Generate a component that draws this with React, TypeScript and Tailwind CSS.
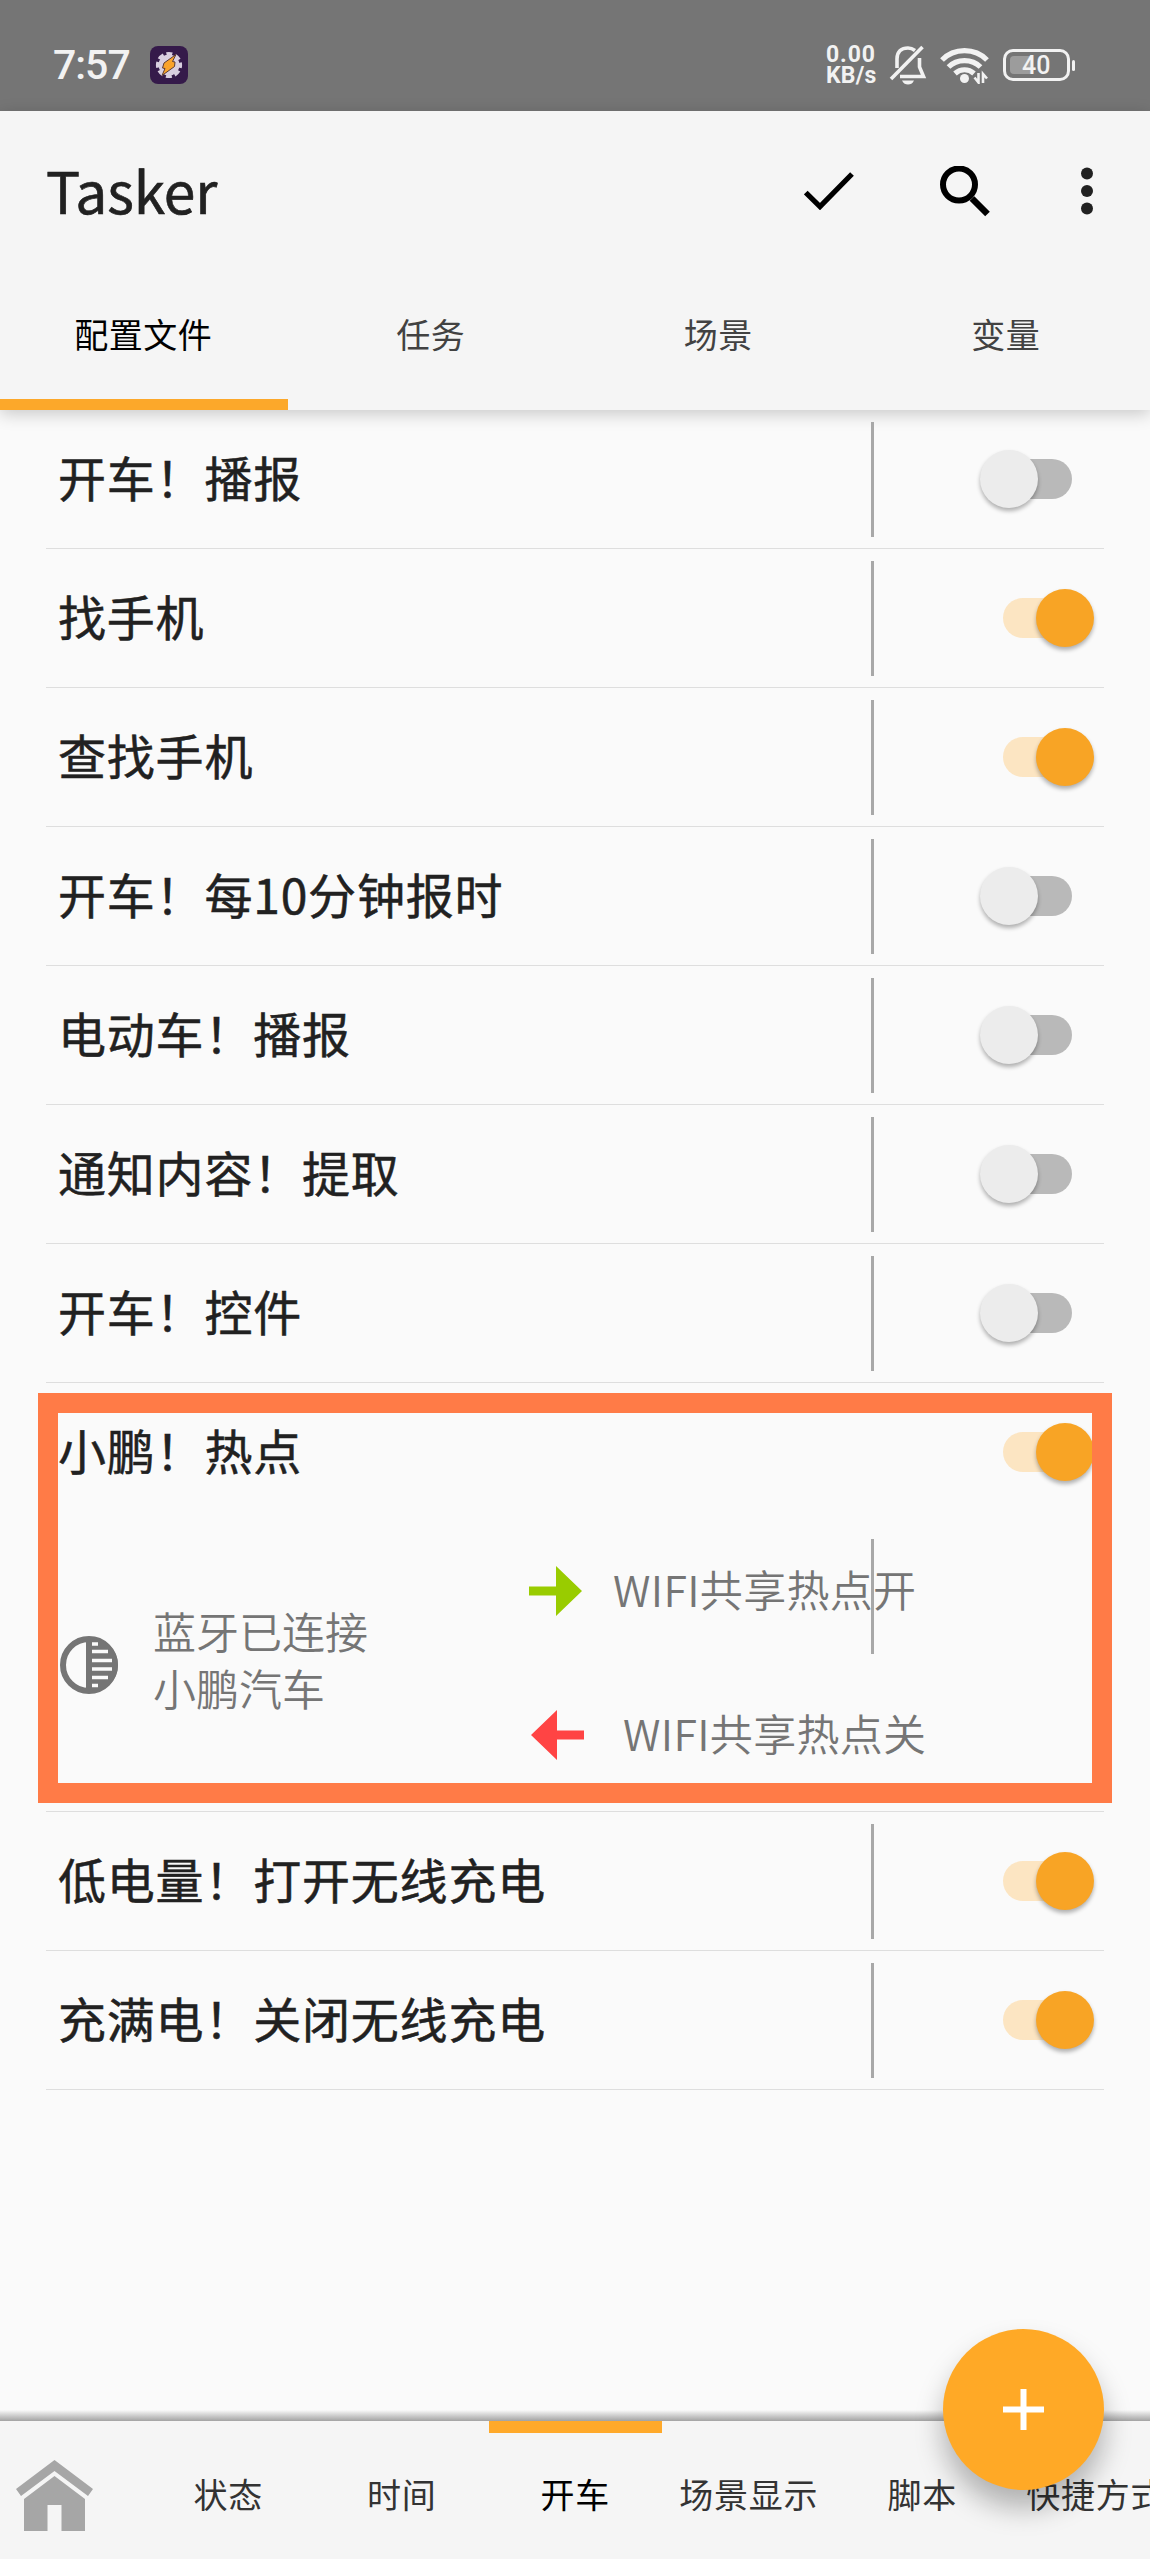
import clsx from "clsx";

const tabs = ["配置文件", "任务", "场景", "变量"];

const profiles = [
  { id: 1, name: "开车！播报", enabled: false },
  { id: 2, name: "找手机", enabled: true },
  { id: 3, name: "查找手机", enabled: true },
  { id: 4, name: "开车！每10分钟报时", enabled: false },
  { id: 5, name: "电动车！播报", enabled: false },
  { id: 6, name: "通知内容！提取", enabled: false },
  { id: 7, name: "开车！控件", enabled: false },
];

const chargingProfiles = [
  { id: 9, name: "低电量！打开无线充电", enabled: true },
  { id: 10, name: "充满电！关闭无线充电", enabled: true },
];

const projects = ["状态", "时间", "开车", "场景显示", "脚本", "快捷方式"];

function StatusBar() {
  return (
    <div className="flex h-[111px] shrink-0 items-center bg-[#757575] pt-[19px] pr-[75px] pl-[53px] font-[Roboto,sans-serif] text-[#f2f2f2]">
      <span className="w-[97px] text-[41px] leading-none font-medium tracking-[-1px]">7:57</span>
      <svg className="h-[38px] w-[38px]" viewBox="0 0 38 38">
        <rect width="38" height="38" rx="8" fill="#351a4a" />
        <circle cx="19" cy="19" r="10.5" fill="#d9cfe0" />
        <circle cx="19" cy="19" r="10.8" fill="none" stroke="#d9cfe0" strokeWidth="4.6" strokeDasharray="5.600 2.882" strokeDashoffset="2.800" />
        <path d="M26 8.500 L14 17 L12.500 22 L15 22.500 L12 29.500 L24.500 20.500 L25 16 L22.500 15.500 Z" fill="#f9a32a" stroke="#5a3a35" strokeWidth="1" />
      </svg>
      <div className="mr-[12px] ml-auto flex w-[51px] flex-col gap-[5px] text-[23px] leading-[16px] font-bold">
        <span className="tracking-[0.9px]">0.00</span>
        <span className="tracking-[0.2px]">KB/s</span>
      </div>
      <svg className="h-[40px] w-[38px]" viewBox="0 0 38 40" fill="none" stroke="currentColor" strokeWidth="3.6">
        <path d="M8 23 V14 C8 6.500 12.500 3 19 3 C22 3 24 4 26 5.500" />
        <path d="M30.5 13 V22 L34.5 31.500 H11" />
        <path d="M2 34 L33.500 2" />
        <path d="M13 35.500 H25 C23.500 38.500 21.500 39.500 19 39.500 C16.500 39.500 14.500 38.500 13 35.500 Z" fill="currentColor" stroke="none" />
      </svg>
      <svg className="ml-[13px] h-[37px] w-[49px]" viewBox="0 0 49 37" fill="none" stroke="currentColor" strokeWidth="5.2">
        <path d="M2 13 C14 .5 35 .5 47 13" />
        <path d="M8.500 20 C17 11.500 32 11.500 40.500 20" />
        <path d="M15 26.500 C20.500 21.500 28.500 21.500 34 26.500" />
        <circle cx="24.500" cy="31.500" r="4.500" fill="currentColor" stroke="none" />
        <path d="M38.500 26 V35.500 L34.500 30.500 M43 36 V27 L47 31.500" strokeWidth="2.6" />
      </svg>
      <div className="ml-[14px] flex h-[32px] w-[67px] items-center rounded-[10px] border-[3px] border-[#f2f2f2] p-1">
        <div className="flex h-[18px] w-[22px] items-center rounded-l-[4px] bg-[#9c9c9c] pl-[12px]">
          <span className="text-[25px] leading-none font-medium">40</span>
        </div>
      </div>
      <div className="ml-[2px] h-[11px] w-[3px] rounded-sm bg-[#f2f2f2]" />
    </div>
  );
}

function AppBar() {
  return (
    <div className="flex h-[163px] shrink-0 items-center pb-[3px] pl-[46px]">
      <h1 className="mr-auto pb-[3px] text-[57px] leading-none tracking-[-0.2px] text-[#212121] [-webkit-text-stroke:0.6px_#212121]">
        Tasker
      </h1>
      <svg className="h-[38px] w-[50px]" viewBox="0 0 50 38" fill="none" stroke="#000" strokeWidth="5.200">
        <path d="M1.800 20.500 L16 34.600 L48 2" />
      </svg>
      <svg className="ml-[86px] h-[51px] w-[51px]" viewBox="0 0 51 51" fill="none" stroke="#000">
        <circle cx="19" cy="18.500" r="16" strokeWidth="6" />
        <path d="M32 32.500 L47.500 48" strokeWidth="6.500" />
      </svg>
      <svg className="mr-[56px] ml-[89px] h-[48px] w-[14px]" viewBox="0 0 14 48" fill="#212121">
        <circle cx="7" cy="6.500" r="6" />
        <circle cx="7" cy="24" r="6" />
        <circle cx="7" cy="41.500" r="6" />
      </svg>
    </div>
  );
}

function Toggle({ enabled }: { enabled: boolean }) {
  return (
    <div
      className={clsx(
        "mx-auto flex h-10 w-[69px] items-center rounded-full",
        enabled ? "justify-end bg-[#fce5c2]" : "bg-[#b9b9b9]"
      )}
    >
      <div
        className={clsx(
          "h-[58px] w-[58px] shrink-0 rounded-full shadow-[0_3px_4px_rgba(0,0,0,0.3)]",
          enabled ? "-mr-[22px] bg-[#f8a425]" : "-ml-[23px] bg-[#ececec]"
        )}
      />
    </div>
  );
}

function ProfileName({ name }: { name: string }) {
  return (
    <span className="w-[825px] pb-[6px] pl-[12px] text-[48px] leading-none tracking-[0.8px] text-[#212121] [-webkit-text-stroke:0.5px_#212121]">
      {name}
    </span>
  );
}

function ProfileRow({ name, enabled }: { name: string; enabled: boolean }) {
  return (
    <div className="flex h-[139px] items-center border-b border-[#dedede]">
      <ProfileName name={name} />
      <div className="h-[115px] w-[3px] bg-[#a8a8a8]" />
      <div className="w-[230px] pl-[96px]">
        <Toggle enabled={enabled} />
      </div>
    </div>
  );
}

function HotspotProfile() {
  return (
    <div className="relative h-[429px] border-b border-[#dedede]">
      <div className="flex h-[138px] items-center">
        <ProfileName name="小鹏！热点" />
        <div className="w-[233px] pl-[99px]">
          <Toggle enabled />
        </div>
      </div>
      <div className="flex h-[289px] text-[43px] leading-[58px] text-[#757575]">
        <div className="flex w-[483px] items-center pb-[2px] pl-[14px]">
          <svg className="mr-[35px] h-[58px] w-[58px]" viewBox="0 0 58 58">
            <circle cx="29" cy="29" r="26" fill="none" stroke="#757575" strokeWidth="6" />
            <path d="M26 3 H32 A26 26 0 0 1 32 55 H26 Z" fill="#757575" />
            <path
              d="M32 8 H38 M32 15.500 H48 M32 24.500 H52 M32 33 H52 M32 41.500 H48 M32 49.500 H38"
              stroke="#fafafa"
              strokeWidth="3.500"
            />
          </svg>
          <div className="pb-[11px] leading-[57px] font-[350]">
            <div>蓝牙已连接</div>
            <div>小鹏汽车</div>
          </div>
        </div>
        <div className="pt-[41px] font-[350] tracking-[0.3px]">
          <div className="flex h-[58px] items-center">
            <svg className="h-[50px] w-[53px]" viewBox="0 0 53 50" fill="#99cc00">
              <path d="M0 20.500 H27 V0 L53 25 L27 50 V29.500 H0 Z" />
            </svg>
            <span className="ml-[31px] pb-[7px]">WIFI共享热点开</span>
          </div>
          <div className="mt-[86px] flex h-[58px] items-center">
            <svg className="ml-[2px] h-[50px] w-[53px]" viewBox="0 0 53 50" fill="#ff4444">
              <path d="M53 20.500 H26 V0 L0 25 L26 50 V29.500 H53 Z" />
            </svg>
            <span className="ml-[39px] pb-[7px]">WIFI共享热点关</span>
          </div>
        </div>
      </div>
      <div className="absolute top-[156px] left-[825px] h-[115px] w-[3px] bg-[#a8a8a8]" />
      <div className="absolute top-[10px] -left-[8px] h-[410px] w-[1074px] border-[20px] border-[#ff7b47]" />
    </div>
  );
}

function ProjectBar() {
  return (
    <div className="relative flex h-[138px] shrink-0 bg-[#f5f5f5] text-[34px] tracking-[0.8px] text-[#333]">
      <div className="absolute -top-[11px] left-0 h-[11px] w-full bg-gradient-to-t from-[#a3a3a3] to-[#fafafa]" />
      <div className="flex w-[142px] shrink-0 pt-[39px] pl-[16px]">
        <svg className="h-[71px] w-[77px]" viewBox="0 0 77 71" fill="#a6a6a6">
          <path d="M38.500 0 L77 29 L72 36 L38.500 11 L5 36 L0 29 Z" />
          <path d="M38.500 16 L69 39 V71 H45.500 V45 H31.500 V71 H8 V39 Z" />
        </svg>
      </div>
      {projects.map((project) => (
        <div
          key={project}
          className={clsx(
            "mr-[1px] flex w-[172.500px] shrink-0 justify-center border-t-[12px] pt-[35px] leading-[52px] whitespace-nowrap",
            project === "开车" ? "border-[#ffa92a] text-black" : "border-transparent"
          )}
        >
          {project}
        </div>
      ))}
    </div>
  );
}

export default function App() {
  return (
    <div className="relative flex h-[2559px] w-[1150px] flex-col overflow-hidden bg-[#fafafa] font-['Noto_Sans_CJK_SC',sans-serif]">
      <StatusBar />
      <header className="shrink-0 bg-[#f5f5f5] shadow-[0_4px_16px_rgba(0,0,0,0.2)]">
        <AppBar />
        <nav className="flex h-[136px] text-[34px] tracking-[0.5px] text-[#424242]">
          {tabs.map((tab, i) => (
            <div
              key={tab}
              className={clsx(
                "flex flex-1 justify-center border-b-[11px] pt-[34px] pr-[1px] leading-[52px]",
                i === 0 ? "border-[#fca82a] text-black" : "border-transparent"
              )}
            >
              {tab}
            </div>
          ))}
        </nav>
      </header>

      <main className="mx-[46px] flex-1">
        {profiles.map((profile) => (
          <ProfileRow key={profile.id} name={profile.name} enabled={profile.enabled} />
        ))}
        <HotspotProfile />
        {chargingProfiles.map((profile) => (
          <ProfileRow key={profile.id} name={profile.name} enabled={profile.enabled} />
        ))}
      </main>

      <ProjectBar />

      <button className="absolute right-[46px] bottom-[69px] flex h-[161px] w-[161px] items-center justify-center rounded-full bg-[#ffa926] shadow-[0_18px_28px_rgba(0,0,0,0.28)]">
        <svg className="h-[41px] w-[41px]" viewBox="0 0 41 41" stroke="#fff" strokeWidth="6">
          <path d="M20.500 0 V41 M0 20.500 H41" />
        </svg>
      </button>
    </div>
  );
}
